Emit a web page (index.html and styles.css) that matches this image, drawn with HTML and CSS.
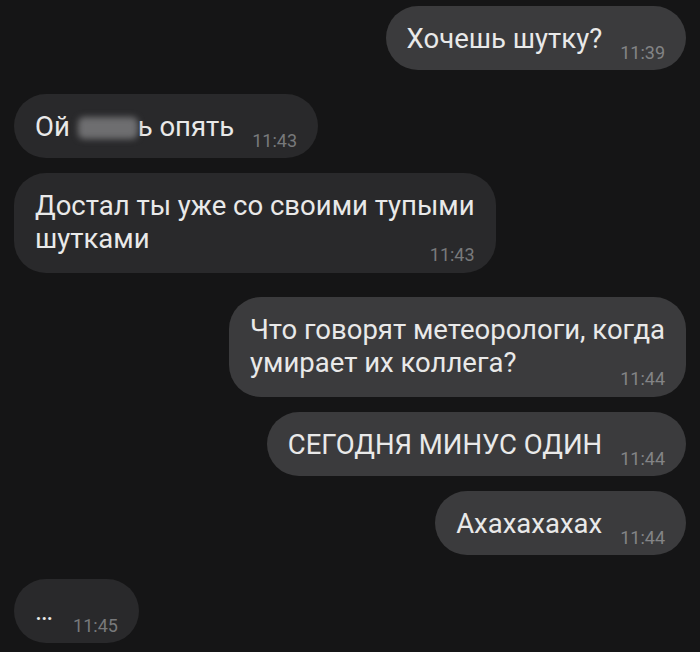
FILE: index.html
```html
<!DOCTYPE html>
<html>
<head>
	<meta charset="UTF-8">
	<title>Чат</title>
	<link rel="stylesheet" href="styles.css">
</head>
<body>
	<div class="chat">
		<div class="bubble out">
			<span class="text">Хочешь шутку?</span>
			<span class="time">11:39</span>
		</div>
		<div class="bubble in">
			<span class="text">Ой <span class="blur"></span>ь опять</span>
			<span class="time">11:43</span>
		</div>
		<div class="bubble in stack">
			<span class="text">Достал ты уже со своими тупыми<br>шутками</span>
			<span class="time">11:43</span>
		</div>
		<div class="bubble out stack">
			<span class="text">Что говорят метеорологи, когда<br>умирает их коллега?</span>
			<span class="time">11:44</span>
		</div>
		<div class="bubble out">
			<span class="text">СЕГОДНЯ МИНУС ОДИН</span>
			<span class="time">11:44</span>
		</div>
		<div class="bubble out">
			<span class="text">Ахахахахах</span>
			<span class="time">11:44</span>
		</div>
		<div class="bubble in">
			<span class="text dots">…</span>
			<span class="time">11:45</span>
		</div>
	</div>
</body>
</html>
```

FILE: styles.css
```css
*{margin: 0;padding: 0;box-sizing: border-box;}
html,body{background: #151516;}
body{font-family: Roboto, "Noto Sans", sans-serif;color: #e9e9e9;}
.chat{display: flex;flex-direction: column;gap: 15px;padding: 6px 14px;width: 700px;height: 652px;overflow: hidden;}

.bubble{display: flex;align-items: flex-end;padding: 16px 21px 15px;border-radius: 32px;font-size: 27.5px;line-height: 33px;}
.bubble.out{align-self: flex-end;background: #3b3b3d;}
.bubble.in{align-self: flex-start;background: #29292b;}
.bubble.in + .bubble.out,
.bubble.out + .bubble.in{margin-top: 9px;}

.text{white-space: nowrap;}
.time{font-size: 18px;line-height: 18px;color: #838486;margin-left: 18px;margin-bottom: -7px;white-space: nowrap;}
.bubble.in .time{color: #78797b;}

.bubble.stack{flex-direction: column;align-items: stretch;padding-bottom: 9px;}
.bubble.stack .time{align-self: flex-end;margin: -9px 0 0;}

.blur{display: inline-block;width: 60px;height: 22px;vertical-align: -3px;margin-left: 1px;background: #6e6e70;border-radius: 6px;filter: blur(3px);}
.dots{font-size: 27px;letter-spacing: 2px;}
```
